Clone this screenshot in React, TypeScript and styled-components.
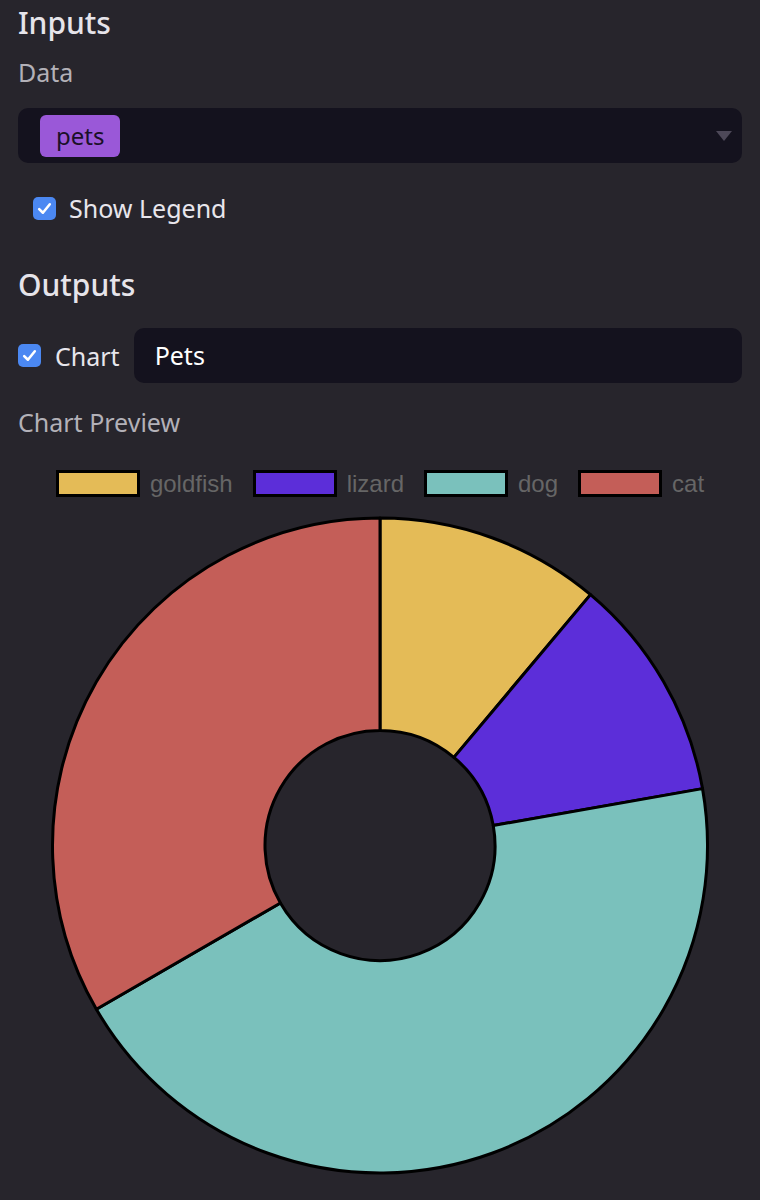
import React from "react";
import styled, { createGlobalStyle } from "styled-components";

const GlobalStyle = createGlobalStyle`
  html, body {
    margin: 0;
    padding: 0;
    background: #27252c;
  }
  body {
    font-family: "Noto Sans", "Open Sans", sans-serif;
    color: #e8e6ec;
  }
`;

const Page = styled.div`
  width: 760px;
  min-height: 1200px;
  box-sizing: border-box;
  padding: 0 18px;
  background: #27252c;
  display: flex;
  flex-direction: column;
`;

const Heading = styled.h2<{ $top: number }>`
  margin: ${(p) => p.$top}px 0 0;
  height: 46px;
  line-height: 46px;
  font-size: 30px;
  font-weight: 500;
  color: #e6e4ea;
`;

const Label = styled.div<{ $top: number }>`
  margin-top: ${(p) => p.$top}px;
  height: 44px;
  line-height: 44px;
  font-size: 25px;
  color: #b3b1b8;
`;

const Select = styled.div`
  margin-top: 14px;
  height: 55px;
  border-radius: 10px;
  background: #14121e;
  display: flex;
  align-items: center;
  padding: 0 10px 0 22px;
  justify-content: space-between;
`;

const Tag = styled.span`
  height: 42px;
  padding: 0 16px;
  border-radius: 6px;
  background: #9a58d8;
  color: #1b1028;
  font-size: 24px;
  line-height: 41px;
  box-sizing: border-box;
`;

const Arrow = styled.span`
  width: 0;
  height: 0;
  border-left: 8px solid transparent;
  border-right: 8px solid transparent;
  border-top: 10px solid #4d4858;
`;

const CheckRow = styled.label<{ $top: number; $indent: number }>`
  margin-top: ${(p) => p.$top}px;
  padding-left: ${(p) => p.$indent}px;
  height: 44px;
  display: flex;
  align-items: center;
  gap: 13px;
  font-size: 25px;
  color: #e8e6ec;
`;

const Box = styled.span`
  width: 23px;
  height: 23px;
  border-radius: 5px;
  background: #4b88f2;
  display: flex;
  align-items: center;
  justify-content: center;
  flex-shrink: 0;
`;

const OutputRow = styled.div`
  margin-top: 20px;
  height: 55px;
  display: flex;
  align-items: center;
`;

const OutputCheck = styled.span`
  display: flex;
  align-items: center;
  gap: 14px;
  font-size: 25px;
  color: #e8e6ec;
  margin-right: 14px;
`;

const TextField = styled.div`
  flex: 1;
  height: 55px;
  border-radius: 10px;
  background: #14121e;
  color: #ffffff;
  font-size: 25px;
  line-height: 55px;
  padding-left: 21px;
`;

const Legend = styled.div`
  margin-top: 26px;
  height: 27px;
  display: flex;
  justify-content: center;
  gap: 20px;
`;

const LegendItem = styled.div`
  display: flex;
  align-items: center;
  gap: 10px;
  font-family: "Liberation Sans", Arial, sans-serif;
  font-size: 24px;
  color: #666666;
`;

const Swatch = styled.span<{ $color: string }>`
  width: 84px;
  height: 27px;
  box-sizing: border-box;
  border: 3.5px solid #000;
  background: ${(p) => p.$color};
`;

const ChartWrap = styled.div`
  margin: 8px -18px 0;
  display: flex;
  justify-content: center;
`;

const Check = () => (
  <Box>
    <svg width="17" height="17" viewBox="0 0 16 16">
      <path
        d="M3 8.5 L6.5 12 L13 4"
        fill="none"
        stroke="#fff"
        strokeWidth="2.4"
        strokeLinecap="round"
        strokeLinejoin="round"
      />
    </svg>
  </Box>
);

const data = [
  { label: "goldfish", value: 1, color: "#e4bb57" },
  { label: "lizard", value: 1, color: "#5c2ed9" },
  { label: "dog", value: 4, color: "#7ac1bc" },
  { label: "cat", value: 3, color: "#c45e58" },
];

const CX = 380;
const CY = 340.5;
const R = 327.5;
const r = 115;

const pt = (rad: number, a: number) => [
  CX + rad * Math.sin(a),
  CY - rad * Math.cos(a),
];

const Doughnut = () => {
  const total = data.reduce((s, d) => s + d.value, 0);
  let start = 0;
  const segs = data.map((d) => {
    const a0 = start;
    const a1 = start + (d.value / total) * Math.PI * 2;
    start = a1;
    const large = a1 - a0 > Math.PI ? 1 : 0;
    const [x0, y0] = pt(R, a0);
    const [x1, y1] = pt(R, a1);
    const [x2, y2] = pt(r, a1);
    const [x3, y3] = pt(r, a0);
    const path = `M${x0} ${y0} A${R} ${R} 0 ${large} 1 ${x1} ${y1} L${x2} ${y2} A${r} ${r} 0 ${large} 0 ${x3} ${y3} Z`;
    return <path key={d.label} d={path} fill={d.color} stroke="#000" strokeWidth="3" strokeLinejoin="round" />;
  });
  return (
    <svg width="760" height="685" viewBox="0 0 760 685">
      {segs}
    </svg>
  );
};

export default function App() {
  return (
    <>
      <GlobalStyle />
      <Page>
        <Heading $top={0}>Inputs</Heading>
        <Label $top={4}>Data</Label>
        <Select>
          <Tag>pets</Tag>
          <Arrow />
        </Select>
        <CheckRow $top={23} $indent={15}>
          <Check />
          Show Legend
        </CheckRow>
        <Heading $top={32}>Outputs</Heading>
        <OutputRow>
          <OutputCheck>
            <Check />
            Chart
          </OutputCheck>
          <TextField>Pets</TextField>
        </OutputRow>
        <Label $top={17}>Chart Preview</Label>
        <Legend>
          {data.map((d) => (
            <LegendItem key={d.label}>
              <Swatch $color={d.color} />
              {d.label}
            </LegendItem>
          ))}
        </Legend>
        <ChartWrap>
          <Doughnut />
        </ChartWrap>
      </Page>
    </>
  );
}
